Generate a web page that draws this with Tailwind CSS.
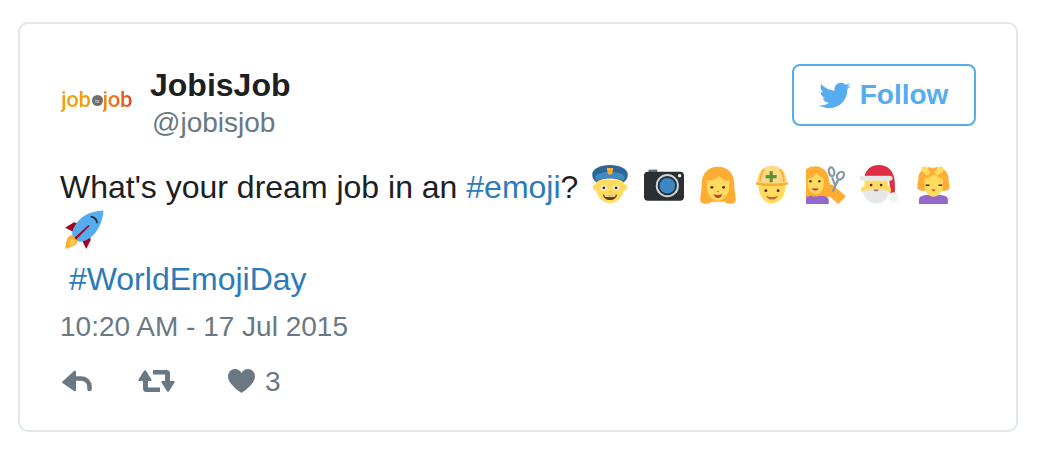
<!DOCTYPE html>
<html lang="en">
<head>
    <meta charset="UTF-8">
    <title>JobisJob tweet</title>
    <script src="https://cdn.jsdelivr.net/npm/@tailwindcss/browser@4"></script>
</head>
<body class="bg-white font-['Liberation_Sans',Arial,sans-serif]">
    <div class="w-[1044px] h-[458px] pl-[18px] pt-[22px] overflow-hidden">
        <div class="w-[1000px] h-[410px] border-2 border-[#e1e8ed] rounded-[10px] pt-[40px] px-[40px]">
            <!-- Header -->
            <div class="flex justify-between h-[100px]">
                <div class="flex">
                    <div class="w-[72px] h-[72px] flex items-center justify-center">
                        <div class="flex items-center font-['Roboto',sans-serif] font-medium text-[22px] leading-[26px] tracking-[-0.3px] ml-[1px]">
                            <span class="bg-linear-to-r from-[#f0a30a] to-[#f59a0e] bg-clip-text text-transparent pr-[1px]">job</span>
                            <span class="w-[11px] h-[11px] shrink-0 rounded-full bg-[#6e6e6e] text-[#c8c8c8] text-[6px] leading-none flex items-center justify-center mt-[1px]">is</span>
                            <span class="bg-linear-to-r from-[#f28a12] to-[#e8431f] bg-clip-text text-transparent">job</span>
                        </div>
                    </div>
                    <div class="ml-[18px]">
                        <div class="text-[32px] leading-[42px] font-bold text-[#1c2022]">JobisJob</div>
                        <div class="text-[28px] leading-[34px] text-[#697882] ml-[2px]">@jobisjob</div>
                    </div>
                </div>
                <div class="w-[184px] h-[62px] border-2 border-[#55acee] rounded-[8px] pr-[2px] flex items-center justify-center gap-[9px] text-[#55acee] text-[28px] font-bold">
                    <svg viewBox="0 0 24 24" class="w-[33px] h-[33px] fill-[#55acee]"><path d="M23.643 4.937c-.835.37-1.732.62-2.675.733.962-.576 1.7-1.49 2.048-2.578-.9.534-1.897.922-2.958 1.13-.85-.904-2.06-1.47-3.4-1.47-2.572 0-4.658 2.086-4.658 4.66 0 .364.042.718.12 1.06-3.873-.195-7.304-2.05-9.602-4.868-.4.69-.63 1.49-.63 2.342 0 1.616.823 3.043 2.072 3.878-.764-.025-1.482-.234-2.11-.583v.06c0 2.257 1.605 4.14 3.737 4.568-.392.106-.803.162-1.227.162-.3 0-.593-.028-.877-.082.593 1.85 2.313 3.198 4.352 3.234-1.595 1.25-3.604 1.995-5.786 1.995-.376 0-.747-.022-1.112-.065 2.062 1.323 4.51 2.093 7.14 2.093 8.57 0 13.255-7.098 13.255-13.254 0-.2-.005-.402-.014-.602.91-.658 1.7-1.477 2.323-2.41z"/></svg>
                    <span>Follow</span>
                </div>
            </div>

            <!-- Tweet text -->
            <p class="text-[32px] leading-[46px] text-[#1c2022] whitespace-nowrap">What's your dream job in an <span class="text-[#2b7bb9]">#emoji</span>?
                <!-- police officer -->
                <svg viewBox="0 0 36 36" class="inline-block w-[40px] h-[40px] ml-[3px] mr-[2px] align-[-6px]">
                    <path fill="#FFDC5D" d="M2.500 21a2.800 2.800 0 0 1 3-2.800V14h25v4.200A2.800 2.800 0 0 1 33.500 21a2.800 2.800 0 0 1-3 2.800C29 30.500 24 35 18 35S7 30.500 5.500 23.800A2.800 2.800 0 0 1 2.500 21z"/>
                    <path fill="#2A6797" d="M18 1C9 1 2 4.500 2 9.500c0 3 1.500 5.500 3.500 7C8 14 12 13 18 13s10 1 12.500 3.500c2-1.500 3.500-4 3.500-7C34 4.500 27 1 18 1z"/>
                    <path fill="#4289C1" d="M5 10.500c3-2.500 8-3.500 13-3.500s10 1 13 3.500V15c-3-1.800-8-2.500-13-2.500S8 13.200 5 15z"/>
                    <path fill="#FFAC33" d="M15 3.500h6l-1 5-2 1.500-2-1.500z"/>
                    <ellipse cx="12.500" cy="21.500" rx="2.400" ry="2.100" fill="#fff"/><ellipse cx="23.500" cy="21.500" rx="2.400" ry="2.100" fill="#fff"/>
                    <circle cx="12.500" cy="21.500" r="1.300" fill="#292F33"/><circle cx="23.500" cy="21.500" r="1.300" fill="#292F33"/>
                    <path fill="#664500" d="M11.500 27.500c2 .8 11 .8 13 0-.500 3.200-3 5-6.500 5s-6-1.800-6.500-5z"/>
                    <path fill="#fff" d="M13 28c3 .4 7 .4 10 0l-.3 1.200c-3 .4-6.400.4-9.400 0z"/>
                    <path fill="#EE9547" d="M16.500 25h3l-1.500 .7z"/>
                </svg>
                <!-- camera -->
                <svg viewBox="0 0 36 36" class="inline-block w-[40px] h-[40px] ml-[3px] mr-[2px] align-[-6px]">
                    <path fill="#66757F" d="M4 5h8v4H4z"/>
                    <path fill="#292F33" d="M3.500 7h29a3.500 3.500 0 0 1 3.500 3.500v19a3.500 3.500 0 0 1-3.500 3.500h-29A3.500 3.500 0 0 1 0 29.500v-19A3.500 3.500 0 0 1 3.500 7z"/>
                    <circle cx="21" cy="19.500" r="10.400" fill="#CCD6DD"/>
                    <circle cx="21" cy="19.500" r="8.700" fill="#292F33"/>
                    <circle cx="21" cy="19.500" r="7" fill="#3B88C3"/>
                    <circle cx="32" cy="10.500" r="1.500" fill="#fff"/>
                </svg>
                <!-- woman -->
                <svg viewBox="0 0 36 36" class="inline-block w-[40px] h-[40px] ml-[3px] mr-[2px] align-[-6px]">
                    <path fill="#FFAC33" d="M18 2.500C9 2.500 3.500 9 3.500 17c0 6-1.500 11-1.500 15 0 2.500 2 4 4 3.500 2 .5 5 0 6-1.500h12c1 1.500 4 2 6 1.500 2 .5 4-1 4-3.500 0-4-1.500-9-1.500-15C32.500 9 27 2.500 18 2.500z"/>
                    <path fill="#FFDC5D" d="M8 15c4 0 8-1.500 11-4 2 2.500 5 4 9 4v6c0 7-5 12-10 12S8 28 8 21z"/>
                    <circle cx="12.500" cy="21" r="1.300" fill="#662113"/><circle cx="23" cy="21" r="1.300" fill="#662113"/>
                    <path fill="#DD2E44" d="M14 27c2.500 1.200 5.500 1.200 8 0-.8 2.400-2.200 3.500-4 3.500s-3.200-1.100-4-3.500z"/>
                    <path fill="#C1694F" d="M17 24.500h2v.8h-2z"/>
                </svg>
                <!-- construction worker -->
                <svg viewBox="0 0 36 36" class="inline-block w-[40px] h-[40px] ml-[3px] mr-[2px] align-[-6px]">
                    <path fill="#FFDC5D" d="M6 17h24v4c0 8-5.500 14.500-12 14.500S6 29 6 21z"/>
                    <path fill="#FFD983" d="M18 1.500C10 1.500 4.500 8 4.500 17h27C31.500 8 26 1.500 18 1.500z"/>
                    <path fill="#FFAC33" d="M3.500 16.500c5 1.500 24 1.500 29 0v2c-5 1.800-24 1.800-29 0zM10 4c-2 3-3.500 7-3.500 12H8c0-4 1.500-8 3.500-10.500zM26 4c2 3 3.500 7 3.500 12H28c0-4-1.500-8-3.500-10.500z"/>
                    <path fill="#5C913B" d="M15.800 6.500h2.900V10h3.500v2.900h-3.500v3.500h-2.900v-3.500h-3.500V10h3.500z"/>
                    <circle cx="12.500" cy="24" r="1.300" fill="#662113"/><circle cx="23.500" cy="24" r="1.300" fill="#662113"/>
                    <path fill="#C1694F" d="M12.500 28.500c3 1.500 8 1.500 11 0-1 2.500-3 3.500-5.500 3.500s-4.500-1-5.500-3.500z"/>
                </svg>
                <!-- haircut -->
                <svg viewBox="0 0 36 36" class="inline-block w-[40px] h-[40px] ml-[3px] mr-[2px] align-[-6px]">
                    <path fill="#FFAC33" d="M8 2C3 2 0 5 0 5v25h21l2-6-3-13C19 6 14 2 8 2z"/>
                    <path fill="#FFAC33" d="M19 21l4-3 13 11-7 7-10-9z"/>
                    <path fill="#FFDC5D" d="M1.500 13c3 0 6-2 8-5 1 2 4 4 6.500 5v5c0 5-3.500 9-7 9s-7.500-4-7.500-9z"/>
                    <circle cx="4" cy="15.500" r="1.100" fill="#662113"/><circle cx="12" cy="15.500" r="1.100" fill="#662113"/>
                    <path fill="#DD2E44" d="M5 21.500c2 .8 4.500 .8 6.500 0-.5 1.500-1.900 2.300-3.200 2.300S5.500 23 5 21.500z"/>
                    <path fill="#9268CA" d="M0 30c1.500-1 4-1.500 4.500-1.500 1 1 6.500 1 7.500 0 .5 0 3.500 .2 5 .5 1.500 .3 3.500 2 3.500 3V36H0z"/>
                    <path fill="none" stroke="#8899A6" stroke-width="2" d="M29 14l-5 11M23.500 12l3 8"/>
                    <ellipse cx="23" cy="7" rx="2.400" ry="4" fill="none" stroke="#8899A6" stroke-width="2" transform="rotate(-10 23 7)"/>
                    <ellipse cx="31" cy="10.500" rx="2.800" ry="3.800" fill="none" stroke="#8899A6" stroke-width="2" transform="rotate(35 31 10.500)"/>
                </svg>
                <!-- santa -->
                <svg viewBox="0 0 36 36" class="inline-block w-[40px] h-[40px] ml-[3px] mr-[2px] align-[-6px]">
                    <path fill="#DD2E44" d="M4 12C5 5 10 1 17 1c8 0 13 5 14 13 .5 4 .5 9 .5 13h-4L26 12z"/>
                    <path fill="#E6E7E8" d="M2 10.500h25a1.800 1.800 0 0 1 0 4.500H2a2.200 2.200 0 0 1 0-4.500z"/>
                    <path fill="#FFDC5D" d="M4 15h21v5a3 3 0 0 1 0 6H4a3 3 0 0 1 0-6z"/>
                    <path fill="#E6E7E8" d="M3 24c3 0 7-2 11.500-2S23 24 26 24c0 6.500-5 11.500-11.500 11.500S3 30.500 3 24z"/>
                    <circle cx="10" cy="19" r="1.200" fill="#662113"/><circle cx="19" cy="19" r="1.200" fill="#662113"/>
                    <path fill="#C1694F" d="M12 23h5l-1 1.500h-3z"/>
                    <circle cx="30.500" cy="30" r="4.500" fill="#F1F2F2"/>
                </svg>
                <!-- person gesturing -->
                <svg viewBox="0 0 36 36" class="inline-block w-[40px] h-[40px] ml-[3px] mr-[2px] align-[-6px]">
                    <path fill="#FFAC33" d="M17 4c-3-2-6-1-8 1-3 1-5 4-5 8 0 3-1 5-1 8 0 2 2 3 4 3h21c2 0 4-1 4-3 0-3-1-5-1-8 0-4-2-7-5-8-2-2-6-3-9-1z"/>
                    <path fill="#9268CA" d="M4.500 36v-4c0-2 1.500-3 3.500-3.500 2-.3 3-.5 4.500-.5h10c1.500 0 2.500 .2 4.500 .5 2 .5 3.500 1.500 3.500 3.500v4z"/>
                    <path fill="#FFDC5D" d="M9.500 13c3 0 6-1.500 8.500-4 2.500 2.500 5 4 8 4v7c0 5-4.500 9.500-8.500 9.500S9.500 25 9.500 20z"/>
                    <path fill="#FFDC5D" d="M7 2.500h4l4 5-3 3-5.500-4zM26 2.500h-4l-4 5 3 3 5.500-4z"/>
                    <path fill="#662113" d="M10.500 18.500h3.500v1.200h-3.500zM22 18.500h3.500v1.200H22z"/>
                    <path fill="#DD2E44" d="M15.500 23h4l-2 1.800z"/>
                </svg>
                <br>
                <!-- rocket -->
                <svg viewBox="0 0 36 36" class="inline-block w-[40px] h-[40px] ml-[4px] mr-[2px] align-[-6px]">
                    <path fill="#A0041E" d="M1 16l8-5 7 2-7 7zM20 35l4-8-1-7-7 7z"/>
                    <path fill="#FFAC33" d="M3.500 25C6 22 9 22 11 24c2 2 2 5-1 7.500-2 1.500-7 3-9 3.500.5-2.500 1-8 2.500-10.500z"/>
                    <path fill="#FFCC4D" d="M6 27c1.500-1.500 3-1.500 4-.5s1 2.500-.5 4c-1 1-3 1.500-4.500 2 .3-1.500.3-4.300 1-5.500z"/>
                    <path fill="#55ACEE" d="M35.500 .5C26 1 17 4 12 11 8 16 7 20 7.500 22c.5 2 4.500 6 6.500 6.500 2 .5 7-1 12-5.500C32 17 35 9 35.500 .5z"/>
                    <path fill="#A0041E" d="M9.500 25L22 13.500l1 1-12 12z"/>
                    <path fill="none" stroke="#292F33" stroke-width="1.600" d="M24 6c3 0 6 3 6 6"/>
                </svg>
                <br>&nbsp;<span class="text-[#2b7bb9]">#WorldEmojiDay</span>
            </p>

            <!-- Timestamp -->
            <div class="text-[28px] leading-[36px] text-[#697882] mt-[7px]">10:20 AM - 17 Jul 2015</div>

            <!-- Actions -->
            <div class="flex items-center mt-[18px] ml-[2px] h-[36px] text-[28px] text-[#697882]">
                <svg viewBox="0 0 30 22" class="w-[30px] h-[22px]"><path fill="#697882" d="M.5 11.500 12 1c.8-.7 2-.2 2 .9v18.200c0 1.100-1.200 1.600-2 .9L.5 13a1 1 0 0 1 0-1.500z"/><path fill="none" stroke="#697882" stroke-width="4.600" stroke-linecap="round" d="M12 8.500h7.500a8 8 0 0 1 8 8V19"/></svg>
                <svg viewBox="0 0 37 22" class="w-[37px] h-[22px] ml-[46px]"><path fill="#697882" d="M.5 9.500 6 .8c.5-.8 1.500-.8 2 0l5.500 8.700c.4.600 0 1.500-.8 1.500H10v6.500h12V22H8.500A3.500 3.500 0 0 1 5 18.500V11H1.300c-.8 0-1.200-.9-.8-1.500z"/><path fill="#697882" d="M36.500 12.500 31 21.200c-.5.800-1.500.8-2 0l-5.500-8.700c-.4-.6 0-1.500.8-1.500H27V4.500H15V0h13.500A3.500 3.500 0 0 1 32 3.500V11h3.700c.8 0 1.200.9.800 1.500z"/></svg>
                <svg viewBox="0 0 27 24" class="w-[27px] h-[24px] ml-[53px] mt-[-1px]"><path fill="#697882" d="M13.500 24C11 22 0 15 0 7.500 0 3 3.200 0 7 0c3 0 5.300 1.700 6.500 4C14.700 1.700 17 0 20 0c3.800 0 7 3 7 7.500C27 15 16 22 13.500 24z"/></svg>
                <span class="ml-[10px] mt-[1px]">3</span>
            </div>
        </div>
    </div>
</body>
</html>
